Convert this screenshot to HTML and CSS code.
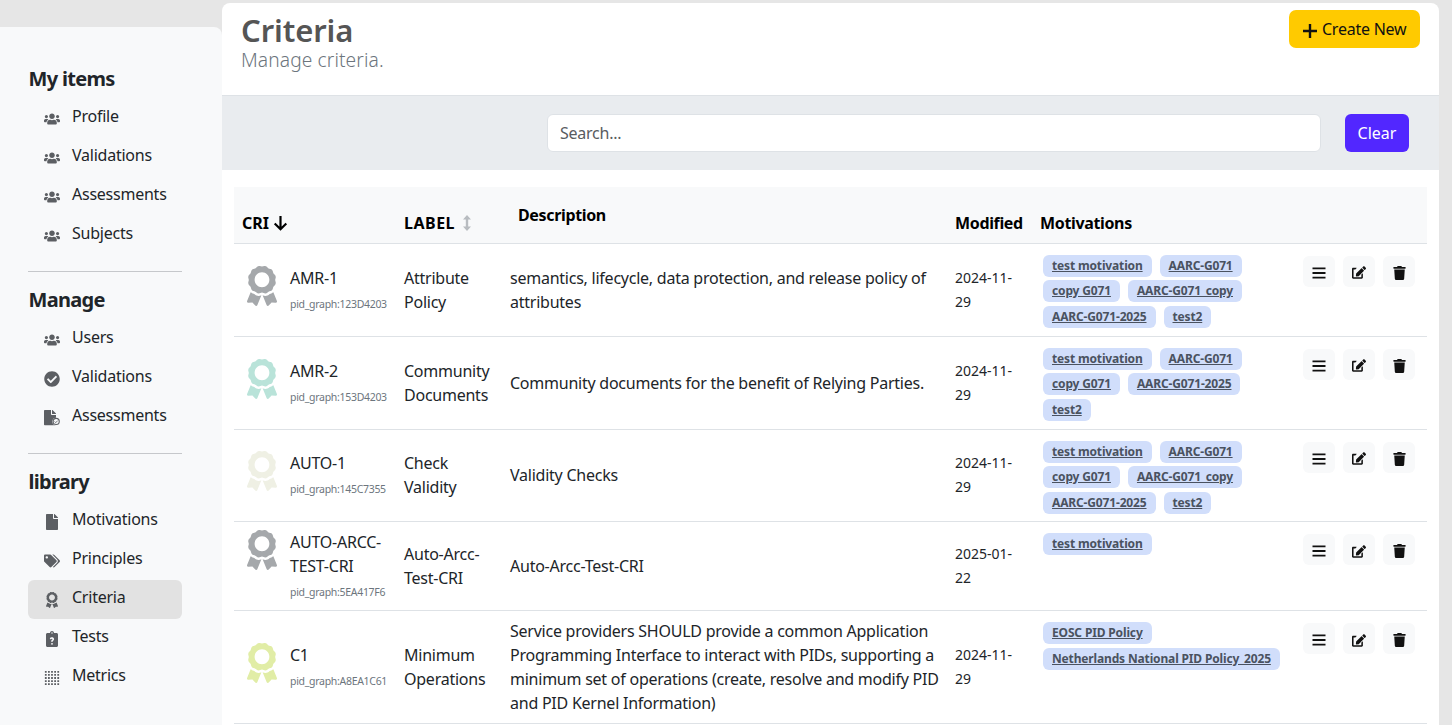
FILE: index.html
```html
<!DOCTYPE html>
<html lang="en">
<head>
<meta charset="utf-8">
<title>Criteria</title>
<link rel="stylesheet" href="styles.css">
</head>
<body>
<svg class="defs" aria-hidden="true">
  <symbol id="i-users" viewBox="0 0 640 512"><path d="M96 224c35.3 0 64-28.7 64-64s-28.7-64-64-64-64 28.7-64 64 28.7 64 64 64zm448 0c35.3 0 64-28.7 64-64s-28.7-64-64-64-64 28.7-64 64 28.7 64 64 64zm32 32h-64c-17.6 0-33.5 7.1-45.1 18.6 40.3 22.1 68.9 62 75.1 109.4h66c17.7 0 32-14.3 32-32v-32c0-35.3-28.7-64-64-64zm-256 0c61.9 0 112-50.1 112-112S381.9 32 320 32 208 82.1 208 144s50.1 112 112 112zm76.8 32h-8.3c-20.8 10-43.9 16-68.5 16s-47.6-6-68.5-16h-8.3C179.6 288 128 339.6 128 403.2V432c0 26.5 21.5 48 48 48h288c26.5 0 48-21.5 48-48v-28.8c0-63.6-51.6-115.2-115.2-115.2zm-223.7-13.4C161.5 263.1 145.6 256 128 256H64c-35.3 0-64 28.7-64 64v32c0 17.7 14.3 32 32 32h65.9c6.3-47.4 34.9-87.3 75.2-109.4z"/></symbol>
  <symbol id="i-check" viewBox="0 0 512 512"><path d="M504 256c0 136.967-111.033 248-248 248S8 392.967 8 256 119.033 8 256 8s248 111.033 248 248zM227.314 387.314l184-184c6.248-6.248 6.248-16.379 0-22.627l-22.627-22.627c-6.248-6.249-16.379-6.249-22.628 0L216 308.118l-70.059-70.059c-6.248-6.248-16.379-6.248-22.628 0l-22.627 22.627c-6.248 6.248-6.248 16.379 0 22.627l104 104c6.249 6.249 16.379 6.249 22.628.001z"/></symbol>
  <symbol id="i-filecheck" viewBox="0 0 512 512"><path d="M224 136V0H24C10.700 0 0 10.700 0 24v440c0 13.300 10.700 24 24 24h336c13.300 0 24-10.700 24-24V160H248c-13.200 0-24-10.800-24-24zm160-14.100v6.100H256V0h6.100c6.400 0 12.500 2.500 17 7l97.900 98c4.500 4.500 7 10.600 7 16.900z"/><circle cx="390" cy="366" r="122" fill="#f8f9fa"/><circle cx="390" cy="366" r="98" fill="none" stroke="#5c5f63" stroke-width="34"/><path d="M340 368l36 36 62-64" fill="none" stroke="#5c5f63" stroke-width="28"/></symbol>
  <symbol id="i-file" viewBox="0 0 384 512"><path d="M224 136V0H24C10.7 0 0 10.7 0 24v464c0 13.3 10.7 24 24 24h336c13.3 0 24-10.7 24-24V160H248c-13.2 0-24-10.8-24-24zm160-14.1v6.1H256V0h6.1c6.4 0 12.5 2.5 17 7l97.9 98c4.5 4.5 7 10.6 7 16.9z"/></symbol>
  <symbol id="i-tags" viewBox="0 0 640 512"><path d="M497.941 225.941L286.059 14.059A48 48 0 0 0 252.118 0H48C21.49 0 0 21.49 0 48v204.118a48 48 0 0 0 14.059 33.941l211.882 211.882c18.744 18.745 49.136 18.746 67.882 0l204.118-204.118c18.745-18.745 18.745-49.137 0-67.882zM112 160c-26.51 0-48-21.49-48-48s21.49-48 48-48 48 21.49 48 48-21.49 48-48 48zm513.941 133.823L421.823 497.941c-18.745 18.745-49.137 18.745-67.882 0l-.36-.36L527.64 323.522c16.999-16.999 26.36-39.6 26.36-63.64s-9.362-46.641-26.36-63.64L331.397 0h48.721a48 48 0 0 1 33.941 14.059l211.882 211.882c18.745 18.745 18.745 49.137 0 67.882z"/></symbol>
  <symbol id="i-award" viewBox="0 0 384 512"><path d="M97.12 362.63c-8.69-8.69-4.16-6.24-25.12-11.85-9.51-2.55-17.87-7.45-25.43-13.32L1.2 448.7c-4.39 10.77 3.81 22.47 15.43 22.03l52.69-2.01L105.56 507c8 8.44 22.04 5.81 26.43-4.96l52.05-127.62c-10.84 6.04-22.87 9.58-35.31 9.58-19.5 0-37.82-7.59-51.61-21.37zM382.8 448.7l-45.37-111.24c-7.56 5.88-15.92 10.77-25.43 13.32-21.07 5.64-16.45 3.18-25.12 11.85-13.79 13.78-32.12 21.37-51.62 21.37-12.44 0-24.47-3.55-35.31-9.58L252 502.04c4.39 10.77 18.44 13.4 26.43 4.96l36.25-38.28 52.69 2.01c11.62.44 19.82-11.27 15.43-22.03zM263 340c15.28-15.55 17.03-14.21 38.79-20.14 13.89-3.79 24.75-14.84 28.47-28.98 7.48-28.4 5.54-24.97 25.95-45.75 10.17-10.35 14.14-25.44 10.42-39.58-7.47-28.38-7.48-24.42 0-52.83 3.72-14.14-.25-29.23-10.42-39.58-20.41-20.78-18.47-17.36-25.95-45.75-3.72-14.14-14.58-25.19-28.47-28.98-27.88-7.61-24.52-5.62-44.95-26.41-10.17-10.35-25-14.4-38.89-10.61-27.87 7.6-23.98 7.61-51.9 0-13.89-3.79-28.72.25-38.89 10.61-20.41 20.78-17.05 18.8-44.94 26.41-13.89 3.79-24.75 14.84-28.47 28.98-7.47 28.39-5.54 24.97-25.95 45.75-10.17 10.35-14.15 25.44-10.42 39.58 7.47 28.36 7.48 24.4 0 52.82-3.72 14.14.25 29.23 10.42 39.59 20.41 20.78 18.47 17.35 25.95 45.75 3.72 14.14 14.58 25.19 28.47 28.98C104.6 325.96 106.27 325 121 340c13.23 13.47 33.84 15.88 49.74 5.82a39.676 39.676 0 0 1 42.53 0c15.89 10.06 36.5 7.65 49.73-5.82zM97.66 175.96c0-53.03 42.24-96.02 94.34-96.02s94.34 42.99 94.34 96.02-42.24 96.02-94.34 96.02-94.34-42.99-94.34-96.02z"/></symbol>
  <symbol id="i-clip" viewBox="0 0 384 512"><path fill-rule="evenodd" d="M336 64h-80c0-35.3-28.7-64-64-64s-64 28.7-64 64H48C21.5 64 0 85.5 0 112v352c0 26.5 21.500 48 48 48h288c26.500 0 48-21.500 48-48V112c0-26.500-21.500-48-48-48zM192 40c13.300 0 24 10.700 24 24s-10.700 24-24 24-24-10.700-24-24 10.700-24 24-24zm-30 370a30 30 0 1 0 60 0a30 30 0 1 0-60 0zm54-66h-52v-20c0-32 42-38 42-58 0-24-38-22-46 2l-38-20c16-62 136-62 136 18 0 42-42 44-42 68z"/></symbol>
  <symbol id="i-grid" viewBox="-1 -1 18 18"><path d="M0 0h2v2H0zM3.500 0h2v2h-2zM7 0h2v2H7zM10.500 0h2v2h-2zM14 0h2v2h-2zM0 3.500h2v2H0zM3.500 3.500h2v2h-2zM7 3.500h2v2H7zM10.500 3.500h2v2h-2zM14 3.500h2v2h-2zM0 7h2v2H0zM3.500 7h2v2h-2zM7 7h2v2H7zM10.500 7h2v2h-2zM14 7h2v2h-2zM0 10.500h2v2H0zM3.500 10.500h2v2h-2zM7 10.500h2v2H7zM10.500 10.500h2v2h-2zM14 10.500h2v2h-2zM0 14h2v2H0zM3.500 14h2v2h-2zM7 14h2v2H7zM10.500 14h2v2h-2zM14 14h2v2h-2z"/></symbol>
  <symbol id="i-bars" viewBox="0 0 14 12"><path d="M.5 .5h13v1.800H.5zM.5 5.100h13v1.800H.5zM.5 9.700h13v1.800H.5z"/></symbol>
  <symbol id="i-edit" viewBox="0 0 576 512"><path d="M402.600 83.200l90.200 90.200c3.800 3.800 3.800 10 0 13.800L274.400 405.600l-92.800 10.300c-12.400 1.400-22.900-9.100-21.500-21.500l10.300-92.800L388.800 83.200c3.800-3.800 10-3.800 13.800 0zm162-22.900l-48.800-48.800c-15.200-15.200-39.900-15.200-55.200 0l-35.400 35.400c-3.800 3.800-3.800 10 0 13.800l90.200 90.200c3.800 3.800 10 3.800 13.800 0l35.400-35.400c15.200-15.300 15.200-40 0-55.200zM384 346.200V448H64V128h73.200c3.200 0 6.200-1.300 8.500-3.500l40-40c7.600-7.600 2.200-20.500-8.500-20.500H48C21.500 64 0 85.500 0 112v352c0 26.500 21.500 48 48 48h352c26.500 0 48-21.500 48-48V306.200c0-10.700-12.900-16-20.500-8.500l-40 40c-2.200 2.300-3.500 5.300-3.500 8.500z"/></symbol>
  <symbol id="i-trash" viewBox="0 0 448 512"><path d="M432 32H312l-9.400-18.700A24 24 0 0 0 281.100 0H166.800a23.720 23.720 0 0 0-21.400 13.300L136 32H16A16 16 0 0 0 0 48v32a16 16 0 0 0 16 16h416a16 16 0 0 0 16-16V48a16 16 0 0 0-16-16zM53.200 467a48 48 0 0 0 47.900 45h245.800a48 48 0 0 0 47.900-45L416 128H32z"/></symbol>
  <symbol id="i-plus" viewBox="0 0 16 16"><path d="M6.800 1h2.400v5.800H15v2.400H9.200V15H6.800V9.200H1V6.800h5.800z"/></symbol>
  <symbol id="i-down" viewBox="0 0 14 16"><path d="M7 1v13.500M1.200 8.500L7 14.300l5.800-5.800" fill="none" stroke="currentColor" stroke-width="2.200"/></symbol>
  <symbol id="i-updown" viewBox="0 0 10 18"><path d="M5 1L9 5.500H6.200v7H9L5 17 1 12.500h2.800v-7H1z"/></symbol>
</svg>

<div class="page">
  <aside class="sidebar">
    <h2 class="side-title">My items</h2>
    <ul class="side-list">
      <li class="side-item"><svg class="side-icon"><use href="#i-users"/></svg>Profile</li>
      <li class="side-item"><svg class="side-icon"><use href="#i-users"/></svg>Validations</li>
      <li class="side-item"><svg class="side-icon"><use href="#i-users"/></svg>Assessments</li>
      <li class="side-item"><svg class="side-icon"><use href="#i-users"/></svg>Subjects</li>
    </ul>
    <hr class="side-rule">
    <h2 class="side-title">Manage</h2>
    <ul class="side-list">
      <li class="side-item"><svg class="side-icon"><use href="#i-users"/></svg>Users</li>
      <li class="side-item"><svg class="side-icon"><use href="#i-check"/></svg>Validations</li>
      <li class="side-item"><svg class="side-icon"><use href="#i-filecheck"/></svg>Assessments</li>
    </ul>
    <hr class="side-rule">
    <h2 class="side-title">library</h2>
    <ul class="side-list">
      <li class="side-item"><svg class="side-icon"><use href="#i-file"/></svg>Motivations</li>
      <li class="side-item"><svg class="side-icon"><use href="#i-tags"/></svg>Principles</li>
      <li class="side-item side-item-active"><svg class="side-icon"><use href="#i-award"/></svg>Criteria</li>
      <li class="side-item"><svg class="side-icon"><use href="#i-clip"/></svg>Tests</li>
      <li class="side-item"><svg class="side-icon"><use href="#i-grid"/></svg>Metrics</li>
    </ul>
  </aside>

  <main class="main">
    <header class="head">
      <div>
        <h1 class="head-title">Criteria</h1>
        <p class="head-sub">Manage criteria.</p>
      </div>
      <button class="btn-create"><svg class="plus"><use href="#i-plus"/></svg>Create New</button>
    </header>

    <div class="search-band">
      <input class="search-input" type="text" placeholder="Search...">
      <button class="btn-clear">Clear</button>
    </div>

    <div class="table-wrap">
      <table class="grid">
        <colgroup>
          <col class="c-cri"><col class="c-label"><col class="c-desc"><col class="c-mod"><col class="c-mot"><col class="c-act">
        </colgroup>
        <thead>
          <tr>
            <th><span class="sort">CRI <svg class="arrow"><use href="#i-down"/></svg></span></th>
            <th><span class="sort sort-label">LABEL <svg class="updown"><use href="#i-updown"/></svg></span></th>
            <th><div class="desc-head">Description</div></th>
            <th>Modified</th>
            <th>Motivations</th>
            <th></th>
          </tr>
        </thead>
        <tbody>
          <tr>
            <td><div class="cri"><svg class="ribbon ribbon-gray"><use href="#i-award"/></svg><div class="cri-text"><div>AMR-1</div><div class="pid">pid_graph:123D4203</div></div></div></td>
            <td>Attribute Policy</td>
            <td>semantics, lifecycle, data protection, and release policy of attributes</td>
            <td class="date">2024-11-29</td>
            <td class="mots"><a class="tag">test motivation</a><a class="tag">AARC-G071</a><a class="tag">copy G071</a><a class="tag">AARC-G071_copy</a><a class="tag">AARC-G071-2025</a><a class="tag">test2</a></td>
            <td class="acts"><div class="act-row"><button class="act"><svg class="ic-bars"><use href="#i-bars"/></svg></button><button class="act"><svg class="ic-edit"><use href="#i-edit"/></svg></button><button class="act"><svg class="ic-trash"><use href="#i-trash"/></svg></button></div></td>
          </tr>
          <tr>
            <td><div class="cri"><svg class="ribbon ribbon-teal"><use href="#i-award"/></svg><div class="cri-text"><div>AMR-2</div><div class="pid">pid_graph:153D4203</div></div></div></td>
            <td>Community Documents</td>
            <td>Community documents for the benefit of Relying Parties.</td>
            <td class="date">2024-11-29</td>
            <td class="mots"><a class="tag">test motivation</a><a class="tag">AARC-G071</a><a class="tag">copy G071</a><a class="tag">AARC-G071-2025</a><a class="tag">test2</a></td>
            <td class="acts"><div class="act-row"><button class="act"><svg class="ic-bars"><use href="#i-bars"/></svg></button><button class="act"><svg class="ic-edit"><use href="#i-edit"/></svg></button><button class="act"><svg class="ic-trash"><use href="#i-trash"/></svg></button></div></td>
          </tr>
          <tr class="row-tight">
            <td><div class="cri"><svg class="ribbon ribbon-cream"><use href="#i-award"/></svg><div class="cri-text"><div>AUTO-1</div><div class="pid">pid_graph:145C7355</div></div></div></td>
            <td>Check Validity</td>
            <td>Validity Checks</td>
            <td class="date">2024-11-29</td>
            <td class="mots"><a class="tag">test motivation</a><a class="tag">AARC-G071</a><a class="tag">copy G071</a><a class="tag">AARC-G071_copy</a><a class="tag">AARC-G071-2025</a><a class="tag">test2</a></td>
            <td class="acts"><div class="act-row"><button class="act"><svg class="ic-bars"><use href="#i-bars"/></svg></button><button class="act"><svg class="ic-edit"><use href="#i-edit"/></svg></button><button class="act"><svg class="ic-trash"><use href="#i-trash"/></svg></button></div></td>
          </tr>
          <tr>
            <td><div class="cri"><svg class="ribbon ribbon-gray"><use href="#i-award"/></svg><div class="cri-text"><div>AUTO-ARCC-TEST-CRI</div><div class="pid">pid_graph:5EA417F6</div></div></div></td>
            <td>Auto-Arcc-Test-CRI</td>
            <td>Auto-Arcc-Test-CRI</td>
            <td class="date">2025-01-22</td>
            <td class="mots"><a class="tag">test motivation</a></td>
            <td class="acts"><div class="act-row"><button class="act"><svg class="ic-bars"><use href="#i-bars"/></svg></button><button class="act"><svg class="ic-edit"><use href="#i-edit"/></svg></button><button class="act"><svg class="ic-trash"><use href="#i-trash"/></svg></button></div></td>
          </tr>
          <tr>
            <td><div class="cri"><svg class="ribbon ribbon-lime"><use href="#i-award"/></svg><div class="cri-text"><div>C1</div><div class="pid">pid_graph:A8EA1C61</div></div></div></td>
            <td>Minimum Operations</td>
            <td>Service providers SHOULD provide a common Application Programming Interface to interact with PIDs, supporting a minimum set of operations (create, resolve and modify PID and PID Kernel Information)</td>
            <td class="date">2024-11-29</td>
            <td class="mots"><a class="tag">EOSC PID Policy</a><a class="tag">Netherlands National PID Policy_2025</a></td>
            <td class="acts"><div class="act-row"><button class="act"><svg class="ic-bars"><use href="#i-bars"/></svg></button><button class="act"><svg class="ic-edit"><use href="#i-edit"/></svg></button><button class="act"><svg class="ic-trash"><use href="#i-trash"/></svg></button></div></td>
          </tr>
        </tbody>
      </table>
    </div>
  </main>
</div>
</body>
</html>
```
FILE: styles.css
```css
* { box-sizing: border-box; }
html, body { height: 100%; margin: 0; overflow: hidden; }
body {
  background: #e6e6e6;
  color: #212529;
  font-family: "Noto Sans", "Open Sans", sans-serif;
  font-size: 16px;
  line-height: 24px;
  letter-spacing: -0.24px;
}
.defs { display: none; }
.page { display: flex; align-items: flex-start; height: 100%; }

.sidebar {
  flex: 0 0 222px;
  height: 698px;
  margin-top: 27px;
  padding: 37px 40px 0 28px;
  background: #f8f9fa;
  border-top-right-radius: 8px;
}
.side-title { margin: 0 0 5px; padding-left: 0.5px; font-size: 20px; line-height: 30px; font-weight: 700; letter-spacing: -0.7px; }
.side-list { margin: 0; padding: 0; list-style: none; }
.side-item {
  display: flex;
  align-items: center;
  height: 39px;
  padding: 0 0 5px 16px;
  border-radius: 6px;
}
.side-item-active { background: #e2e2e2; }
.side-icon { flex: none; width: 16px; height: 16px; margin: 5px 12px 0 0; fill: #5c5f63; }
.side-rule { margin: 16px 0 13px; border: 0; border-top: 1px solid #c6c8cb; }

.main { flex: 0 0 1217px; margin-top: 3px; background: #fff; border-radius: 8px 8px 0 0; height: 722px; overflow: hidden; }
.head { display: flex; justify-content: space-between; height: 92px; padding: 7px 19px 0 19px; }
.head-title { margin: 0; font-size: 31px; line-height: 40px; font-weight: 600; letter-spacing: -0.1px; color: #555; }
.head-sub { margin: 0; font-size: 19.2px; line-height: 20px; font-weight: 300; letter-spacing: 0.1px; color: #6c757d; }
.btn-create {
  display: flex; align-items: center;
  height: 38px; width: 131px; padding: 0 0 0 13px;
  border: 0; border-radius: 7px;
  background: #ffca00; color: #111;
  font: 16px "Noto Sans", sans-serif; letter-spacing: -0.24px;
}
.plus { width: 16px; height: 16px; margin: 4px 4px 0 0; fill: #111; }

.search-band {
  display: flex; align-items: center; gap: 24px;
  height: 75px; padding: 0 30px 0 325px;
  background: #e9ecef;
  border-top: 1px solid #dee2e6;
}
.search-input {
  flex: 1; height: 38px; padding: 0 12px;
  border: 1px solid #dee2e6; border-radius: 6px;
  background: #fff; color: #212529;
  font: 16px "Noto Sans", sans-serif; letter-spacing: -0.24px;
}
.search-input::placeholder { color: #595c5f; opacity: 1; }
.btn-clear {
  width: 64px; height: 38px; border: 0; border-radius: 6px;
  background: #5227ff; color: #fff;
  font: 16px "Noto Sans", sans-serif;
}

.table-wrap { padding: 17px 12px 0; }
.grid { width: 1193px; table-layout: fixed; border-collapse: collapse; }
.c-cri { width: 162px; } .c-label { width: 106px; } .c-desc { width: 445px; }
.c-mod { width: 85px; } .c-mot { width: 263px; } .c-act { width: 132px; }
.grid th {
  height: 56px; padding: 8px; text-align: left; vertical-align: bottom;
  background: #f8f9fa; color: #000; font-weight: 700; letter-spacing: -0.35px;
  border-bottom: 1px solid #dee2e6;
}
.grid td { padding: 8px; vertical-align: middle; border-bottom: 1px solid #dee2e6; }
.sort { display: inline-flex; align-items: center; gap: 4px; letter-spacing: 0; }
.sort-label { gap: 5px; letter-spacing: 0.5px; }
.arrow { width: 15px; height: 16px; color: #000; }
.updown { width: 10px; height: 18px; fill: #b8bcc0; margin-left: 2px; }
.desc-head { padding: 0 0 8px 8px; }

.cri { display: flex; gap: 13px; padding-left: 5px; }
.ribbon { flex: none; width: 30px; height: 40px; }
.ribbon-gray { fill: #a5a8ab; }
.ribbon-teal { fill: #b9e3d9; }
.ribbon-cream { fill: #eff0e4; }
.ribbon-lime { fill: #e1eda6; }
.pid { margin-top: 4px; font-size: 10.5px; line-height: 20px; letter-spacing: -0.3px; color: #6c757d; white-space: nowrap; }
.grid td.date { font-size: 14px; letter-spacing: 0; }
.grid td.mots { padding: 11px 0 4.500px 11px; vertical-align: top; line-height: 0; }
.grid .row-tight td.mots { padding-bottom: 4.200px; }
.tag {
  display: inline-block; height: 22px; margin: 0 8px 3.500px 0; padding: 0 9px;
  border-radius: 6px; background: #d1defb; color: #4a5260;
  font-size: 12px; line-height: 22px; font-weight: 700; letter-spacing: -0.15px;
  text-decoration: underline; white-space: nowrap;
}
.grid td.acts { padding: 12px 12px 0 8px; vertical-align: top; }
.act-row { display: flex; gap: 8px; }
.act {
  display: flex; align-items: center; justify-content: center;
  width: 32px; height: 31px; padding: 3px 0 0; border: 0; border-radius: 6px;
  background: #f8f9fa;
}
.ic-bars { width: 14px; height: 12px; fill: #111; }
.ic-edit { width: 14px; height: 13px; fill: #111; }
.ic-trash { width: 13px; height: 14px; fill: #111; }
```
